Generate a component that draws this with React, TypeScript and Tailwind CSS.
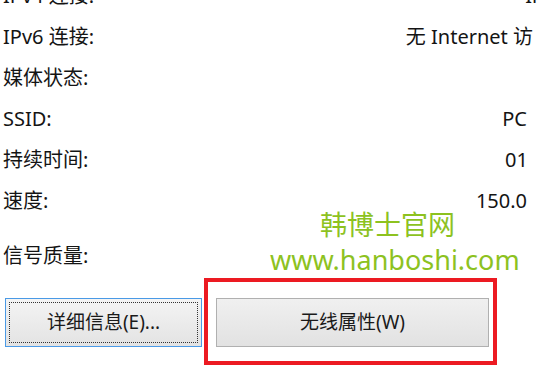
import React from "react";

function Row({ label, value, cls, vcls }: { label: string; value?: string; cls?: string; vcls?: string }) {
  return (
    <div className={"flex h-[41px] items-center justify-between whitespace-nowrap pl-[3px] " + (cls ?? "")}>
      <span>{label}</span>
      {value ? <span className={vcls ?? ""}>{value}</span> : null}
    </div>
  );
}

export default function App() {
  return (
    <div className="relative w-[538px] h-[378px] overflow-hidden bg-white text-[20px] text-[#141414] font-['Noto_Sans','Noto_Sans_CJK_SC',sans-serif]">
      <div className="flex flex-col">
        <div className="mt-[-25px] flex h-[41px] items-center justify-between whitespace-nowrap pl-[3px]">
          <span>IPv4 连接:</span>
          <span className="mr-[-64px]">Internet</span>
        </div>
        <div className="flex h-[41px] items-center justify-between whitespace-nowrap pl-[3px] pr-[5px]">
          <span>IPv6 连接:</span>
          <span>无 Internet 访</span>
        </div>
        <div className="flex h-[41px] items-center justify-between whitespace-nowrap pl-[3px]">
          <span>媒体状态:</span>
          <span className="mr-[-60px] text-[#f4f4f4]">已启用</span>
        </div>
        <Row label="SSID:" value="PC" cls="pr-[11px]" />
        <Row label="持续时间:" value="01" cls="pr-[10px]" />
        <Row label="速度:" value="150.0" cls="pr-[11px]" />
        <Row label="信号质量:" cls="mt-[14px]" />
        <div className="mt-[2px] flex items-start">
          <button className="relative ml-[5px] mt-[20px] flex h-[49px] w-[197px] items-center justify-center border border-[#4a9ae6] bg-gradient-to-b from-[#f4f4f4] to-[#e3e3e3] text-[19px] text-[#1a1a1a]">
            <span className="absolute inset-[3px] border border-dotted border-[#333]" />
            <span>详细信息(E)...</span>
          </button>
          <div className="ml-[2px] h-[87px] w-[293px] border-[4px] border-[#ec1a22] pl-[8px] pt-[16px]">
            <button className="flex h-[49px] w-[273px] items-center justify-center border border-[#b0b0b0] bg-gradient-to-b from-[#f0f0f0] to-[#e2e2e2] text-[19px] text-[#1a1a1a]">
              无线属性(W)
            </button>
          </div>
        </div>
      </div>
      <div className="absolute left-[320px] top-[210px] text-[27px] leading-none text-[#8dc21f] font-['Noto_Sans_CJK_SC',sans-serif]">
        韩博士官网
      </div>
      <div className="absolute left-[270px] top-[246px] text-[27px] leading-none text-[#8dc21f] font-['Noto_Sans',sans-serif]">
        www.hanboshi.com
      </div>
    </div>
  );
}
